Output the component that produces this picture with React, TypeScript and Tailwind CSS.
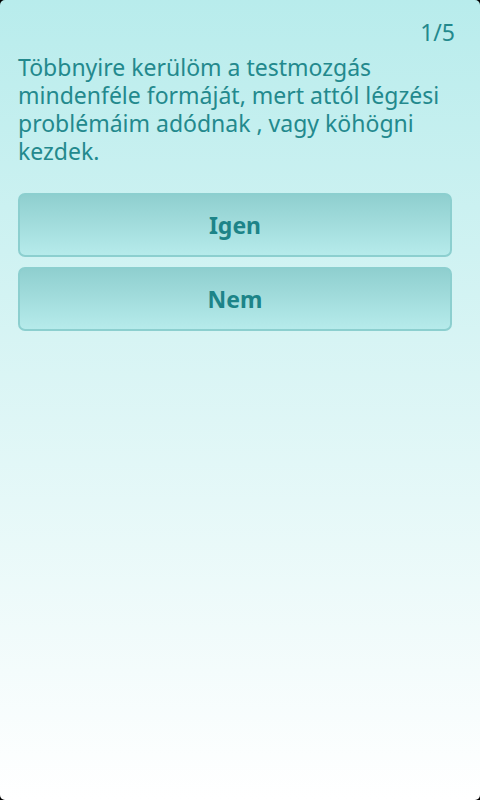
export default function App() {
  return (
    <div className="w-[480px] h-[800px] bg-black">
      <div
        className="w-full h-full rounded-[5px] bg-gradient-to-b from-[#b8ecec] to-[#ffffff] flex flex-col pl-[18px] pr-[28px]"
        style={{ fontFamily: '"Noto Sans", "Open Sans", sans-serif' }}
      >
        <div className="flex justify-end pt-[18px] mr-[-3px] text-[23px] leading-[28px] text-[#23898d]">1/5</div>
        <div className="mt-[7px] text-[23px] leading-[28px] text-[#23898d]">
          Többnyire kerülöm a testmozgás mindenféle formáját, mert attól légzési problémáim adódnak , vagy köhögni kezdek.
        </div>
        <div className="mt-[28px] flex flex-col gap-[10px]">
          <button className="h-[64px] rounded-[7px] border-2 border-[#8ccfcf] bg-gradient-to-b from-[#8fcfcf] to-[#b6ebeb] text-[23px] font-bold text-[#1d8488]">
            Igen
          </button>
          <button className="h-[64px] rounded-[7px] border-2 border-[#8ccfcf] bg-gradient-to-b from-[#8fcfcf] to-[#b6ebeb] text-[23px] font-bold text-[#1d8488]">
            Nem
          </button>
        </div>
      </div>
    </div>
  );
}
